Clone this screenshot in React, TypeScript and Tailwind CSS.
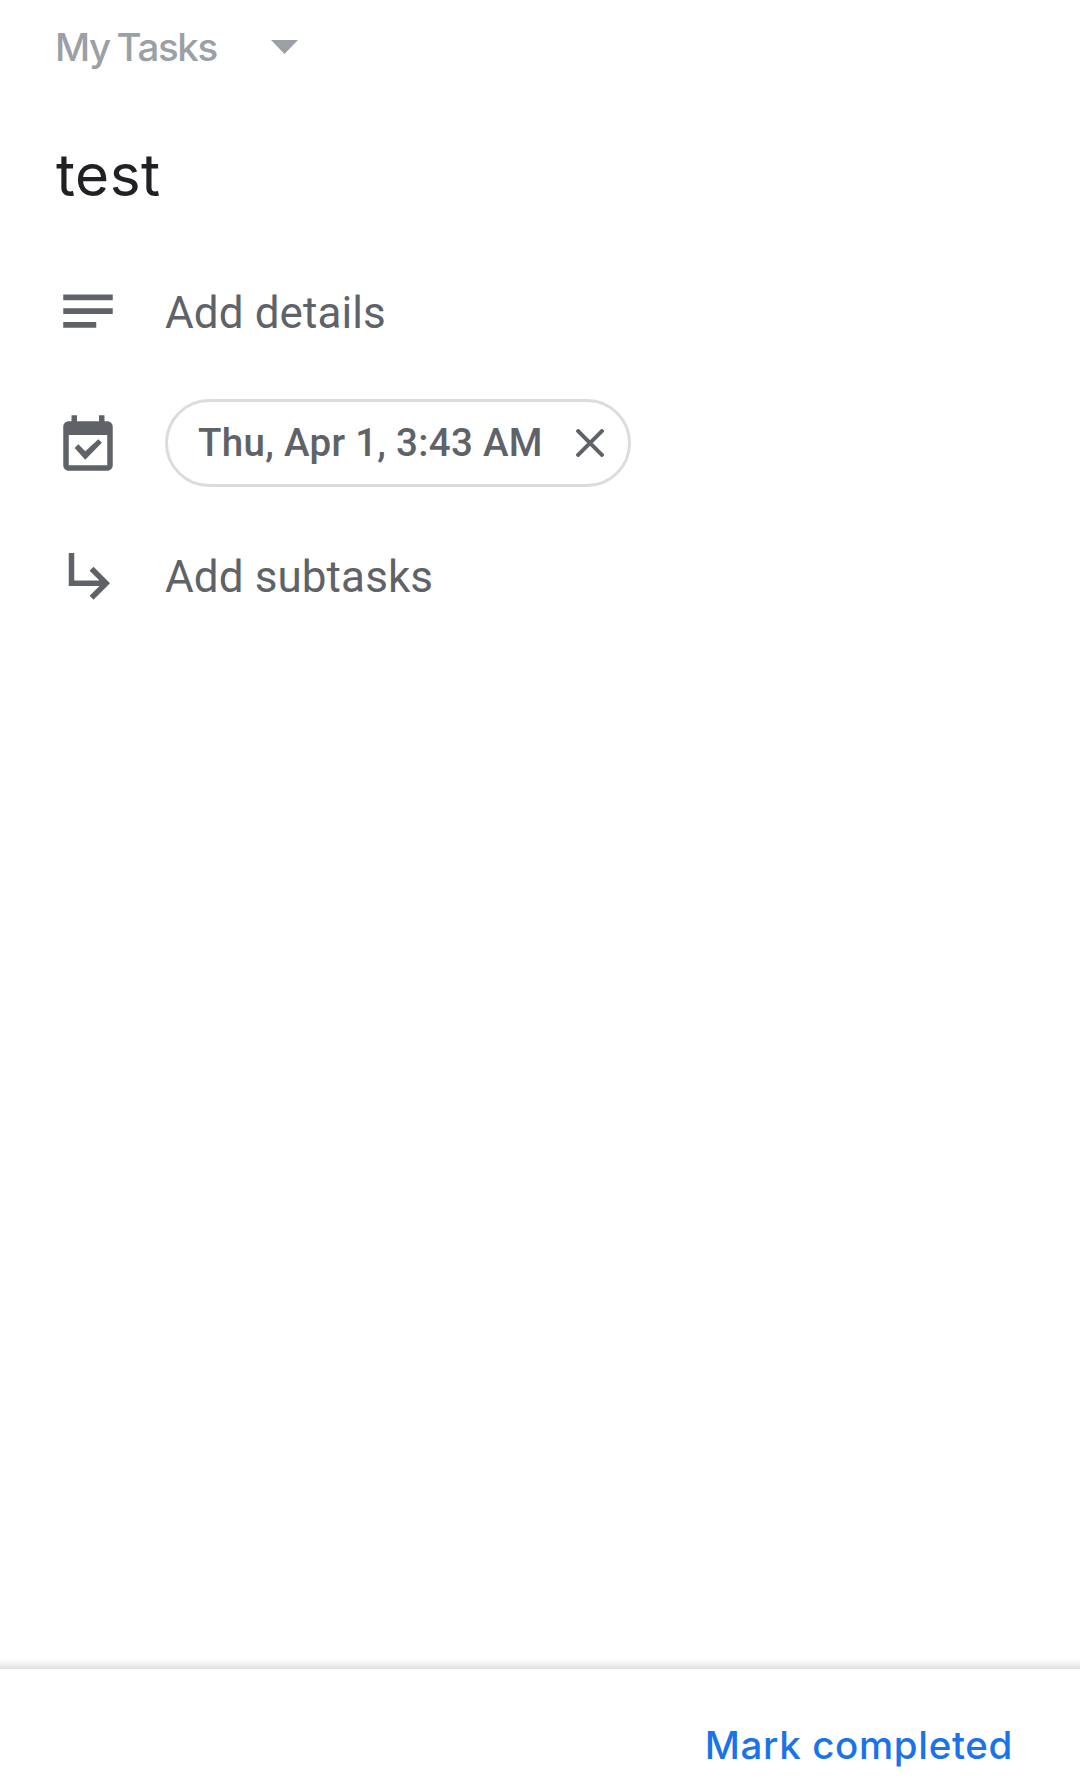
import React from "react";

function NotesIcon() {
  return (
    <svg viewBox="0 0 24 24" className="size-[66px] fill-current">
      <path d="M3 6h18v2.1H3zM3 11h18v2.1H3zM3 16h12v2.1H3z" />
    </svg>
  );
}

function CalendarIcon() {
  return (
    <svg viewBox="0 0 24 24" className="mt-[5px] size-[66px] fill-current">
      <path d="M19 3h-1V.8h-2V3H8V.8H6V3H5c-1.11 0-2 .9-2 2v14c0 1.1.89 2 2 2h14c1.1 0 2-.9 2-2V5c0-1.1-.9-2-2-2zm0 16H5V8h14v11z" />
      <path d="M7.15 12.7l1.35-1.35L11 13.95l4.75-4.45 1.3 1.3L11 17z" />
    </svg>
  );
}

function SubtaskIcon() {
  return (
    <svg viewBox="0 0 24 24" className="size-[66px] fill-current">
      <path d="M5 4v12h11.17l-3.58 3.58L14 21l6-6-6-6-1.41 1.41L16.17 14H7V4z" />
    </svg>
  );
}

export default function App() {
  return (
    <div className="flex h-[1787px] w-[1080px] flex-col overflow-hidden bg-white font-['Roboto',sans-serif] text-[#5f6368]">
      <main className="flex flex-1 flex-col items-start">
        <button className="mt-[20px] ml-[55px] flex h-[54px] items-center font-['Inter',sans-serif] text-[38.5px] font-medium text-[#9aa0a6]">
          <span className="w-[216px] pt-px text-left tracking-[-1.4px] [word-spacing:-2px] whitespace-nowrap">My Tasks</span>
          <svg viewBox="0 0 27 14" className="h-[14px] w-[27px] fill-current">
            <path d="M0 0h27L13.5 14z" />
          </svg>
        </button>

        <h1 className="mt-[64px] ml-[56px] h-[73px] font-['Inter',sans-serif] text-[58.5px] leading-[73px] tracking-[0.5px] text-[#202124]">
          test
        </h1>

        <button className="mt-[67px] ml-[55px] flex h-[66px] items-center gap-[44px]">
          <NotesIcon />
          <span className="pt-[4px] text-[44px] leading-[66px] tracking-[0.1px]">Add details</span>
        </button>

        <div className="mt-[55px] ml-[55px] flex h-[88px] items-center gap-[44px]">
          <CalendarIcon />
          <div className="flex h-[88px] w-[466px] items-center justify-between rounded-full border-[3px] border-[#dadce0] pr-[24px] pl-[30px]">
            <span className="text-[38.5px] font-medium tracking-[0.3px] whitespace-nowrap">Thu, Apr 1, 3:43 AM</span>
            <svg viewBox="0 0 28 28" className="size-[28px] stroke-current stroke-[4]">
              <path d="M0.8 0.8l26.4 26.4M27.2 0.8L0.8 27.2" />
            </svg>
          </div>
        </div>

        <button className="mt-[55px] ml-[55px] flex h-[66px] items-center gap-[44px]">
          <SubtaskIcon />
          <span className="pt-[3px] text-[44px] leading-[66px] tracking-[0.1px]">Add subtasks</span>
        </button>
      </main>

      <div className="h-[11px] bg-linear-to-b from-white via-[#f4f4f4] to-[#dedede]" />
      <footer className="flex h-[118px] items-start justify-end pt-[49px] pr-[67px]">
        <button className="font-['Inter',sans-serif] text-[38.5px] leading-[54px] font-medium tracking-[0.65px] text-[#1a73e8]">
          Mark completed
        </button>
      </footer>
    </div>
  );
}
